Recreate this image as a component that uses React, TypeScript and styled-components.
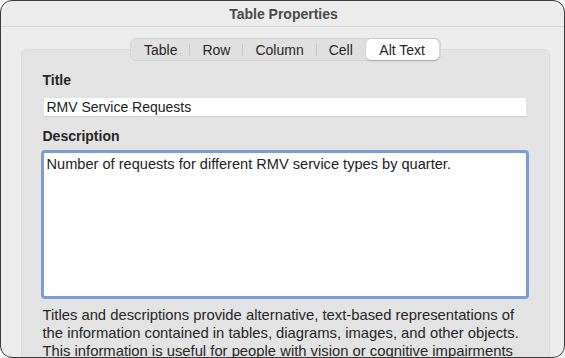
import React from 'react';
import styled, {createGlobalStyle} from 'styled-components';

const GlobalStyle = createGlobalStyle`
  html, body {
    margin: 0;
    padding: 0;
    background: #ffffff;
  }
  * {
    box-sizing: border-box;
  }
`;

const StyledWindow = styled.div`
  width: 565px;
  height: 358px;
  border: 1.5px solid #3a3a3a;
  border-radius: 12px;
  background: #ececec;
  overflow: hidden;
  display: flex;
  flex-direction: column;
  font-family: 'Liberation Sans', Arial, sans-serif;
  color: #262626;
`;

const StyledTitleBar = styled.div`
  height: 26px;
  flex: none;
  display: flex;
  align-items: center;
  justify-content: center;
  border-bottom: 1px solid #d6d6d6;
  font-size: 14px;
  font-weight: bold;
  color: #4a4a4a;
  padding-left: 2px;
`;

const StyledContent = styled.div`
  flex: 1;
  padding: 11px 14px 0 19.5px;
  display: flex;
  flex-direction: column;
`;

const StyledTabRow = styled.div`
  display: flex;
  justify-content: center;
  position: relative;
  z-index: 1;
  margin-bottom: -12px;
`;

const StyledSegmented = styled.div`
  display: flex;
  align-items: center;
  height: 23px;
  padding: 1px;
  background: #e0e0e0;
  border: 1px solid #d4d4d4;
  border-radius: 6px;
`;

const StyledTab = styled.div<{$selected?: boolean}>`
  height: 21px;
  display: flex;
  align-items: center;
  padding: 0 ${(p) => (p.$selected ? '13.5px' : '12px')};
  font-size: 14px;
  color: #262626;
  border-radius: 5px;
  background: ${(p) => (p.$selected ? '#ffffff' : 'transparent')};
  box-shadow: ${(p) => (p.$selected ? '0 0.5px 1.5px rgba(0, 0, 0, 0.22)' : 'none')};
`;

const StyledDivider = styled.div<{$hidden?: boolean}>`
  width: 1px;
  height: 12px;
  background: ${(p) => (p.$hidden ? 'transparent' : '#c9c9c9')};
`;

const StyledGroupBox = styled.div`
  flex: 1;
  background: #e3e3e3;
  border: 1px solid #dbdbdb;
  border-radius: 6px;
  padding: 22px 22px 0 21px;
  display: flex;
  flex-direction: column;
`;

const StyledLabel = styled.div`
  font-size: 14px;
  font-weight: bold;
  line-height: 17px;
  color: #262626;
`;

const StyledInput = styled.div`
  height: 20px;
  margin-top: 8px;
  margin-bottom: 11px;
  background: #ffffff;
  border: 1px solid #e2e2e2;
  border-bottom-color: #cfcfcf;
  display: flex;
  align-items: center;
  padding-left: 3px;
  font-size: 14px;
  color: #222222;
`;

const StyledTextArea = styled.div`
  height: 149px;
  margin: 5px -2px 0;
  background: #ffffff;
  border: 3px solid #7b9cd6;
  border-radius: 4px;
  padding: 3px 3px;
  font-size: 14.6px;
  line-height: 17px;
  color: #222222;
`;

const StyledHelp = styled.p`
  margin: 7px 0 0;
  font-size: 14.8px;
  line-height: 18px;
  color: #262626;
  white-space: nowrap;
`;

const tabs = ['Table', 'Row', 'Column', 'Cell', 'Alt Text'];
const selectedTab = 4;

const helpLines = [
  'Titles and descriptions provide alternative, text-based representations of',
  'the information contained in tables, diagrams, images, and other objects.',
  'This information is useful for people with vision or cognitive impairments',
];

export default function App() {
  return (
    <>
      <GlobalStyle />
      <StyledWindow>
        <StyledTitleBar>Table Properties</StyledTitleBar>
        <StyledContent>
          <StyledTabRow>
            <StyledSegmented>
              {tabs.map((t, i) => (
                <React.Fragment key={t}>
                  {i > 0 && <StyledDivider $hidden={i === selectedTab || i - 1 === selectedTab} />}
                  <StyledTab $selected={i === selectedTab}>{t}</StyledTab>
                </React.Fragment>
              ))}
            </StyledSegmented>
          </StyledTabRow>
          <StyledGroupBox>
            <StyledLabel>Title</StyledLabel>
            <StyledInput>RMV Service Requests</StyledInput>
            <StyledLabel>Description</StyledLabel>
            <StyledTextArea>Number of requests for different RMV service types by quarter.</StyledTextArea>
            <StyledHelp>
              {helpLines.map((line, i) => (
                <React.Fragment key={i}>
                  {i > 0 && <br />}
                  {line}
                </React.Fragment>
              ))}
            </StyledHelp>
          </StyledGroupBox>
        </StyledContent>
      </StyledWindow>
    </>
  );
}
